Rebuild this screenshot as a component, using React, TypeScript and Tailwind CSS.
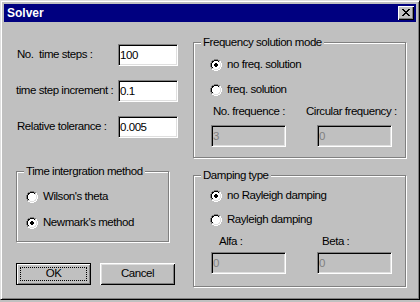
import React from "react";

const OUTER: [number, number][] = [
  [0, 4], [0, 5], [0, 6], [0, 7], [1, 2], [1, 3], [1, 8], [1, 9], [2, 1], [2, 10], [3, 1], [3, 10],
  [4, 0], [4, 11], [5, 0], [5, 11], [6, 0], [6, 11], [7, 0], [7, 11], [8, 1], [8, 10], [9, 1], [9, 10],
  [10, 2], [10, 3], [10, 8], [10, 9], [11, 4], [11, 5], [11, 6], [11, 7],
];
const INNER: [number, number][] = [
  [1, 4], [1, 5], [1, 6], [1, 7], [2, 2], [2, 3], [2, 8], [2, 9], [3, 2], [3, 9],
  [4, 1], [4, 10], [5, 1], [5, 10], [6, 1], [6, 10], [7, 1], [7, 10], [8, 2], [8, 9],
  [9, 2], [9, 3], [9, 8], [9, 9], [10, 4], [10, 5], [10, 6], [10, 7],
];

function Radio({ checked }: { checked?: boolean }) {
  return (
    <svg width="12" height="12" viewBox="0 0 12 12" shapeRendering="crispEdges" className="shrink-0">
      {OUTER.map(([r, c]) => (
        <rect key={"o" + r + "-" + c} x={c} y={r} width="1" height="1" fill={r + c <= 10 ? "#808080" : "#ffffff"} />
      ))}
      {INNER.map(([r, c]) => (
        <rect key={"i" + r + "-" + c} x={c} y={r} width="1" height="1" fill={r + c <= 10 ? "#000000" : "#dfdfdf"} />
      ))}
      <rect x="4" y="2" width="4" height="1" fill="#fff" />
      <rect x="3" y="3" width="6" height="1" fill="#fff" />
      <rect x="2" y="4" width="8" height="4" fill="#fff" />
      <rect x="3" y="8" width="6" height="1" fill="#fff" />
      <rect x="4" y="9" width="4" height="1" fill="#fff" />
      {checked && (
        <>
          <rect x="5" y="4" width="2" height="1" fill="#000" />
          <rect x="4" y="5" width="4" height="2" fill="#000" />
          <rect x="5" y="7" width="2" height="1" fill="#000" />
        </>
      )}
    </svg>
  );
}

function RadioRow({ label, checked, className = "" }: { label: string; checked?: boolean; className?: string }) {
  return (
    <div className={"flex h-[14px] items-center " + className}>
      <Radio checked={checked} />
      <span className="ml-[5px] whitespace-nowrap">{label}</span>
    </div>
  );
}

function Field({ value, disabled, className = "" }: { value: string; disabled?: boolean; className?: string }) {
  return (
    <input
      readOnly
      value={value}
      className={
        "h-[22px] border border-t-[#808080] border-l-[#808080] border-r-white border-b-white pl-[1px] outline-none shadow-[inset_1px_1px_0_#000,inset_-1px_-1px_0_#dfdfdf] " +
        (disabled ? "bg-[#c0c0c0] text-[#808080] " : "bg-white text-black ") +
        className
      }
    />
  );
}

function Group({ title, className = "", children }: { title: string; className?: string; children: React.ReactNode }) {
  return (
    <div className={"relative border border-[#808080] shadow-[inset_1px_1px_0_#fff,1px_1px_0_#fff] " + className}>
      <span className="absolute left-[7px] top-[-8px] bg-[#c0c0c0] px-[2px] leading-[14px] whitespace-nowrap">{title}</span>
      {children}
    </div>
  );
}

const XPIX = [
  "11....11",
  ".11..11.",
  "..1111..",
  "...11...",
  "..1111..",
  ".11..11.",
  "11....11",
];

export default function App() {
  return (
    <div className="h-[302px] w-[420px] bg-[#c0c0c0] font-['Liberation_Sans',Arial,sans-serif] text-[11.5px] tracking-[-0.45px] text-black">
      <div className="flex h-[300px] w-[420px] flex-col border border-t-[#dfdfdf] border-l-[#dfdfdf] border-r-black border-b-black bg-[#c0c0c0] p-[3px] shadow-[inset_1px_1px_0_#fff,inset_-1px_-1px_0_#808080]">
        {/* title bar */}
        <div className="flex h-[18px] items-center justify-between bg-[#000080] pl-[3px] pr-[2px]">
          <span className="text-[12px] font-bold tracking-normal text-white">Solver</span>
          <div className="flex h-[14px] w-[16px] items-center justify-center bg-[#c0c0c0] shadow-[inset_1px_1px_0_#fff,inset_-1px_-1px_0_#000,inset_-2px_-2px_0_#808080]">
            <svg width="8" height="7" viewBox="0 0 8 7" shapeRendering="crispEdges" className="-mt-[1px]">
              {XPIX.flatMap((row, r) =>
                row.split("").map((ch, c) =>
                  ch === "1" ? <rect key={r + "-" + c} x={c} y={r} width="1" height="1" fill="#000" /> : null
                )
              )}
            </svg>
          </div>
        </div>

        {/* content */}
        <div className="flex pl-[12px] pt-[20px]">
          {/* left column */}
          <div className="flex w-[162px] flex-col">
            <div className="mt-[2px] flex h-[22px] items-center">
              <span className="ml-[1px] whitespace-pre">No.  time steps :</span>
              <Field value="100" className="ml-auto w-[60px]" />
            </div>
            <div className="mt-[14px] flex h-[22px] items-center">
              <span className="whitespace-pre">time step increment :</span>
              <Field value="0.1" className="ml-auto w-[60px]" />
            </div>
            <div className="mt-[14px] flex h-[22px] items-center">
              <span className="ml-[1px] whitespace-pre">Relative tolerance :</span>
              <Field value="0.005" className="ml-auto w-[60px]" />
            </div>

            <Group title="Time intergration method" className="mt-[33px] h-[71px] w-[153px] pl-[9px] pt-[18px]">
              <RadioRow label="Wilson's theta" />
              <RadioRow label="Newmark's method" checked className="mt-[12px]" />
            </Group>

            <div className="mt-[21px] flex gap-[9px]">
              <button className="flex h-[22px] w-[75px] items-center justify-center border border-black bg-[#c0c0c0] p-[3px] shadow-[inset_1px_1px_0_#fff,inset_-1px_-1px_0_#808080]">
                <span className="flex h-full w-full items-center justify-center border border-dotted border-black">OK</span>
              </button>
              <button className="flex h-[22px] w-[75px] items-center justify-center bg-[#c0c0c0] shadow-[inset_1px_1px_0_#fff,inset_-1px_-1px_0_#000,inset_2px_2px_0_#dfdfdf,inset_-2px_-2px_0_#808080]">
                Cancel
              </button>
            </div>
          </div>

          {/* right column */}
          <div className="ml-[15px] flex w-[213px] flex-col">
            <Group title="Frequency solution mode" className="h-[116px] pt-[15px]">
              <RadioRow label="no freq. solution" checked className="pl-[16px]" />
              <RadioRow label="freq. solution" className="mt-[11px] pl-[16px]" />
              <div className="mt-[8px] flex h-[14px] items-center pl-[19px] whitespace-nowrap">
                <span className="w-[93px]">No. frequence :</span>
                <span>Circular frequency :</span>
              </div>
              <div className="mt-[6px] flex pl-[17px]">
                <Field value="3" disabled className="w-[75px]" />
                <Field value="0" disabled className="ml-[31px] w-[75px]" />
              </div>
            </Group>

            <Group title="Damping type" className="mt-[17px] h-[112px] pt-[13px]">
              <RadioRow label="no Rayleigh damping" checked className="pl-[16px]" />
              <RadioRow label="Rayleigh damping" className="mt-[10px] pl-[16px]" />
              <div className="mt-[8px] flex h-[14px] items-center pl-[25px] whitespace-nowrap">
                <span className="w-[103px]">Alfa :</span>
                <span>Beta :</span>
              </div>
              <div className="mt-[3px] flex pl-[17px]">
                <Field value="0" disabled className="w-[75px]" />
                <Field value="0" disabled className="ml-[31px] w-[75px]" />
              </div>
            </Group>
          </div>
        </div>
      </div>
    </div>
  );
}
